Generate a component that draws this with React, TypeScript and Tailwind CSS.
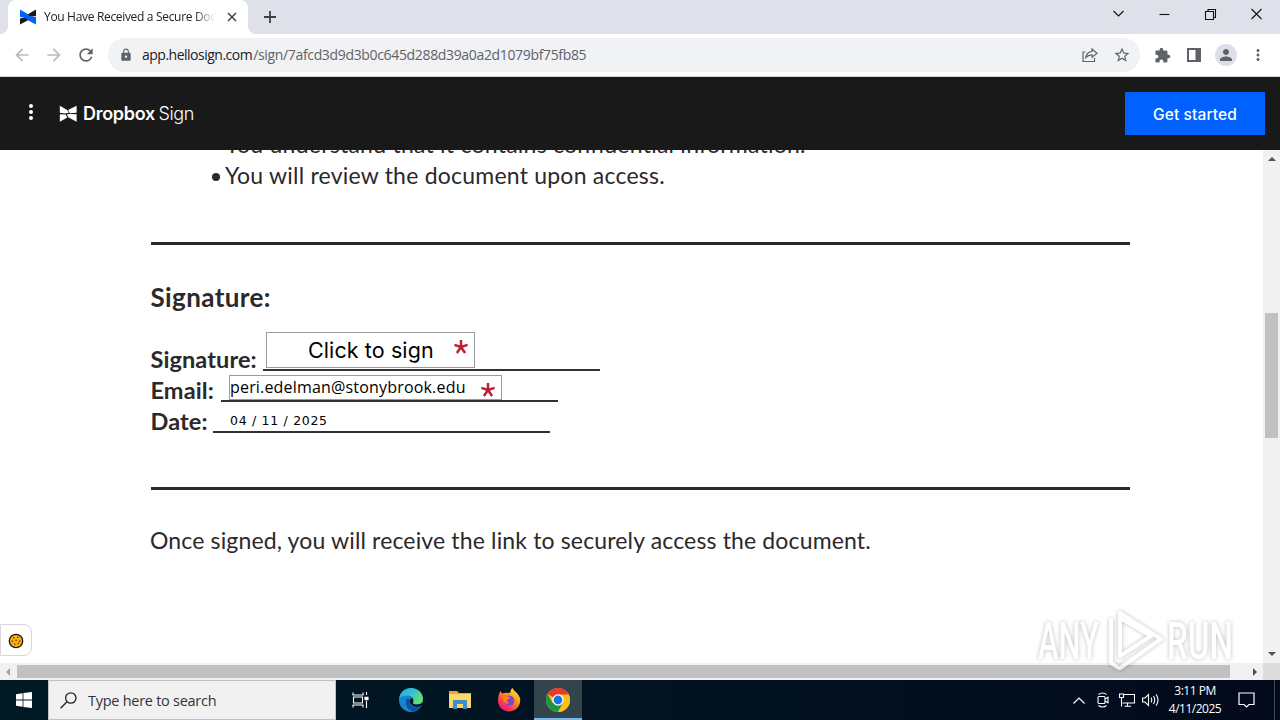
import React from 'react';
import {
    MdArrowBack,
    MdArrowForward,
    MdExtension,
    MdLock,
    MdMoreVert,
    MdPerson,
    MdRefresh,
    MdStarBorder,
} from 'react-icons/md';

const DOC_FONT = "font-['Lato','Liberation_Sans',sans-serif]";
const UI_FONT = "font-['Open_Sans','Noto_Sans',sans-serif]";

function TabStrip() {
    return (
        <div className="flex h-[34px] bg-[#dee1e9] text-[#202124]">
            <div className="w-2 bg-white">
                <div className="h-full rounded-br-lg bg-[#dee1e9]" />
            </div>
            <div className="flex w-[240px] items-center rounded-t-lg bg-white pl-3">
                <svg viewBox="0 0 16 16" className="h-4 w-4 shrink-0">
                    <path d="M16 0.5 V7 L9 8 L7.5 5.5 Z" fill="#1a1919" />
                    <path d="M0 15.5 V9.5 L6.5 8 L8.5 11 Z" fill="#1a1919" />
                    <path d="M0 0.5 L7.6 5 L10.6 7.4 L16 8 V15.5 L8.4 11.4 L5.4 8.8 L0 8 Z" fill="#0061fe" />
                </svg>
                <span className="ml-2 w-[171px] overflow-hidden whitespace-nowrap text-[12px] tracking-[-0.32px] [mask-image:linear-gradient(to_right,black_88%,transparent)]">
                    You Have Received a Secure Doc
                </span>
                <svg viewBox="0 0 10 10" className="ml-[12px] h-[10px] w-[10px] shrink-0" stroke="#45484c" strokeWidth="1.6">
                    <path d="M1 1 L9 9 M9 1 L1 9" />
                </svg>
            </div>
            <div className="w-2 bg-white">
                <div className="h-full rounded-bl-lg bg-[#dee1e9]" />
            </div>
            <svg viewBox="0 0 12 12" className="ml-2 mt-[11px] h-3 w-3" stroke="#3c4043" strokeWidth="1.8">
                <path d="M6 0 V12 M0 6 H12" />
            </svg>
            <div className="ml-auto flex">
                <WindowIcon d="M1.5 4 L6.5 9 L11.5 4" />
                <WindowIcon d="M1.5 7.5 H11.5" />
                <WindowIcon d="M1.5 4.5 H9.5 V12.5 H1.5 Z M4 4 V2.5 H11.5 V10.5 H10" />
                <WindowIcon d="M1.5 2 L11.5 12 M11.5 2 L1.5 12" />
            </div>
        </div>
    );
}

function WindowIcon({ d }: { d: string }) {
    return (
        <div className="flex h-[28px] w-[46px] items-center justify-center pr-px">
            <svg viewBox="0 0 13 14" className="h-[14px] w-[13px]" fill="none" stroke="#111" strokeWidth="1.1">
                <path d={d} />
            </svg>
        </div>
    );
}

function Toolbar() {
    return (
        <div className="flex h-[43px] items-center border-b border-[#d8dadd] bg-white pl-3 text-[#5f6368]">
            <MdArrowBack className="h-5 w-5 text-[#b9bbbe]" />
            <MdArrowForward className="ml-3 h-5 w-5 text-[#b9bbbe]" />
            <MdRefresh className="ml-3 h-5 w-5" />
            <div className="ml-[12px] flex h-[34px] w-[1032px] items-center rounded-full bg-[#f0f2f4] pl-[11px] pr-[9px]">
                <MdLock className="h-[14px] w-[14px]" />
                <span className="mb-px ml-[9px] text-[14px] tracking-[-0.5px] text-[#202124]">app.hellosign.com</span>
                <span className="mb-px ml-px text-[14px] tracking-[-0.34px]">/sign/7afcd3d9d3b0c645d288d39a0a2d1079bf75fb85</span>
                <svg viewBox="0 0 16 16" className="ml-auto h-4 w-4" fill="none" stroke="#5f6368" strokeWidth="1.2">
                    <path d="M3.5 5 H1 V14.5 H12.5 V11" />
                    <path d="M10 2 L15 6.3 L10 10.2 V7.9 C7.5 7.8 5.6 8.6 3.8 10.6 C4.4 7 6.5 4.8 10 4.4 Z" />
                </svg>
                <MdStarBorder className="ml-[15px] h-[18px] w-[18px]" />
            </div>
            <MdExtension className="ml-[14px] h-[17px] w-[17px]" />
            <svg viewBox="0 0 14 14" className="ml-4 h-[14px] w-[14px]" fill="#5f6368">
                <path d="M0 0 H14 V14 H0 Z M2 2 V12 H8.5 V2 Z" fillRule="evenodd" />
            </svg>
            <div className="ml-[14px] flex h-[22px] w-[22px] items-center justify-center rounded-full bg-[#dcdfe8]">
                <MdPerson className="h-[18px] w-[18px]" />
            </div>
            <MdMoreVert className="ml-[12px] h-[18px] w-[18px]" />
        </div>
    );
}

function AppHeader() {
    return (
        <header className="flex h-[73px] items-center bg-[#1a1919] pl-[29px] pr-[15px] text-white">
            <svg viewBox="0 0 4 18" className="-mt-1 h-[18px] w-1" fill="white">
                <circle cx="2" cy="3" r="2" />
                <circle cx="2" cy="9" r="2" />
                <circle cx="2" cy="15" r="2" />
            </svg>
            <svg viewBox="0 0 18 18" className="ml-[26px] h-[18px] w-[18px]" fill="white">
                <path d="M0.8 0.8 L8.2 5 L9.9 7.8 L6 8.6 L0.8 7.8 Z" />
                <path d="M17.6 0.8 V7.8 L10.8 8.2 L9 5 Z" />
                <path d="M0.8 16.8 V9.2 L6.4 9.6 L8.4 12.5 Z" />
                <path d="M17.6 16.8 L9.6 12.4 L7.6 9.5 L11 9 L17.6 9.2 Z" />
            </svg>
            <div className="ml-[6px] whitespace-nowrap font-['Inter',sans-serif] text-[18px] leading-6 tracking-[-0.4px]">
                <span className="font-semibold tracking-[-0.3px]">Dropbox</span> <span className="-ml-px font-light">Sign</span>
            </div>
            <button type="button" className="ml-auto h-[43px] w-[140px] bg-[#0061fe] pt-0.5 font-['Inter',sans-serif] text-[15.5px] font-medium tracking-[0.1px]">
                Get started
            </button>
        </header>
    );
}

function RequiredStar({ className }: { className: string }) {
    return (
        <svg viewBox="0 0 14 14" className={className} stroke="#bd1f36" strokeWidth="2.5">
            <path d="M7 7 V0 M7 7 L0.4 4.9 M7 7 L13.6 4.9 M7 7 L2.9 13 M7 7 L11.1 13" />
        </svg>
    );
}

function FormRow({ label, labelClass, children }: { label: string; labelClass: string; children: React.ReactNode }) {
    return (
        <div className="relative flex h-[31px]">
            <span className={`${labelClass} shrink-0 whitespace-nowrap pl-[0.5px] text-[23.5px] font-bold leading-[30px] tracking-[0.1px]`}>{label}</span>
            <div className="mt-[25px] h-[2px] w-[337px] bg-[#333132]" />
            {children}
        </div>
    );
}

function DocumentPage() {
    return (
        <main className={`relative flex-1 overflow-hidden bg-white pl-[150px] text-[#2b292a] ${DOC_FONT}`}>
            <ul className="-mt-[21px] whitespace-nowrap pl-[62px] text-[23px] leading-[31px]">
                <li className="flex items-center">
                    <span className="mr-[5px] mt-0.5 h-[8px] w-[8px] rounded-full bg-[#2b292a]" />
                    <span className="tracking-[0.24px]">You understand that it contains confidential information.</span>
                </li>
                <li className="flex items-center">
                    <span className="mr-[5px] mt-[3px] h-[8px] w-[8px] rounded-full bg-[#2b292a]" />
                    <span className="tracking-[0.22px]">You will review the document upon access.</span>
                </li>
            </ul>
            <hr className="ml-[0.5px] mt-[51px] h-[3px] w-[979px] border-0 bg-[#2b292a]" />
            <h2 className="mt-[36px] pl-[0.5px] text-[26px] font-bold leading-[32px] tracking-[0.4px]">Signature:</h2>
            <section className="mt-[31px]">
                <FormRow label="Signature:" labelClass="w-[113px]">
                    <button type="button" className="absolute left-[116px] top-[-12px] flex h-[36px] w-[209px] items-center border border-[#9a9a9a] bg-white pl-[41px] font-['Inter',sans-serif] text-[21.5px] tracking-[0.1px] text-black">
                        <span className="whitespace-nowrap">Click to sign</span>
                        <RequiredStar className="mb-[6px] ml-[20px] h-[14px] w-[14px]" />
                    </button>
                </FormRow>
                <FormRow label="Email:" labelClass="w-[71px]">
                    <div className={`absolute left-[79px] top-0 flex h-[25px] w-[273px] items-center border border-[#9a9a9a] bg-white text-[16px] tracking-[0.18px] text-black ${UI_FONT}`}>
                        <span className="mb-[1px] w-[251px] whitespace-nowrap">peri.edelman@stonybrook.edu</span>
                        <RequiredStar className="mt-[5px] h-[14px] w-[14px]" />
                    </div>
                </FormRow>
                <FormRow label="Date:" labelClass="w-[63px]">
                    <span className="absolute left-[80px] top-[7px] whitespace-nowrap font-['DejaVu_Sans',sans-serif] text-[12.5px] leading-4 tracking-[0.7px] text-black">
                        04 / 11 / 2025
                    </span>
                </FormRow>
            </section>
            <hr className="ml-[0.5px] mt-[50px] h-[3px] w-[979px] border-0 bg-[#2b292a]" />
            <p className="mt-[35px] whitespace-nowrap text-[23px] leading-[31px] tracking-[0.15px]">
                Once signed, you will receive the link to securely access the document.
            </p>
            <div className="absolute bottom-[7px] left-0 flex h-[32px] w-[32px] items-center justify-center rounded-r-lg border border-[#dcd6dc] bg-white">
                <svg viewBox="0 0 16 16" className="mt-px h-4 w-4">
                    <circle cx="8" cy="8" r="6.7" fill="#fbb116" stroke="#221a10" strokeWidth="1.3" />
                    <path d="M5 4h1.5v1.5H5z M9 3.5h1.5V5H9z M3.6 7.5h1.5V9H3.6z M7.4 6.5h1.5V8H7.4z M11 7.5h1.5V9H11z M6 10.5h1.5V12H6z M9.4 9.8h1.5v1.5H9.4z" fill="#8c3c14" />
                </svg>
            </div>
        </main>
    );
}

function VerticalScrollbar() {
    return (
        <div className="flex w-[17px] flex-col items-center bg-[#f1f1f1]">
            <svg viewBox="0 0 8 4" className="mt-[7px] h-1 w-2" fill="#505050">
                <path d="M0 4 L4 0 L8 4 Z" />
            </svg>
            <div className="mt-[152px] h-[125px] w-[13px] bg-[#c1c1c1]" />
            <svg viewBox="0 0 8 4" className="mb-[7px] mt-auto h-1 w-2" fill="#505050">
                <path d="M0 0 L4 4 L8 0 Z" />
            </svg>
        </div>
    );
}

function HorizontalScrollbar() {
    return (
        <div className="flex h-[17px] items-center bg-[#f1f1f1]">
            <svg viewBox="0 0 4 8" className="ml-[6px] h-2 w-1" fill="#a3a3a3">
                <path d="M4 0 L0 4 L4 8 Z" />
            </svg>
            <div className="ml-[7px] h-[13px] w-[1213px] bg-[#c1c1c1]" />
            <svg viewBox="0 0 4 8" className="ml-[23px] h-2 w-1" fill="#505050">
                <path d="M0 0 L4 4 L0 8 Z" />
            </svg>
            <div className="ml-auto h-full w-[17px] bg-[#dcdcdc]" />
        </div>
    );
}

function Watermark() {
    return (
        <svg
            viewBox="0 0 200 66"
            className="absolute left-[1036px] top-[608px] h-[66px] w-[200px] drop-shadow-[0_0_2px_rgba(0,0,0,0.35)]"
            opacity="0.75"
        >
            <g fill="#fff" fontFamily="Roboto, sans-serif" fontWeight="500" fontSize="51">
                <text x="2" y="51" textLength="61" lengthAdjust="spacingAndGlyphs">ANY</text>
                <text x="131" y="51" textLength="66" lengthAdjust="spacingAndGlyphs">RUN</text>
            </g>
            <g fill="none" stroke="#fff" strokeWidth="4" strokeLinejoin="round" strokeLinecap="round">
                <path d="M84 5 L125 31 L84 60" />
                <path d="M84 5 V48 L115 28 L86 11" />
                <path d="M75 12 V55 L83 60" />
            </g>
        </svg>
    );
}

function EdgeIcon() {
    return (
        <svg viewBox="0 0 24 24" className="h-6 w-6">
            <defs>
                <linearGradient id="edge-top" x1="0" y1="0" x2="1" y2="0.6">
                    <stop offset="0" stopColor="#2aa6df" />
                    <stop offset="0.5" stopColor="#35c1cf" />
                    <stop offset="1" stopColor="#66e06a" />
                </linearGradient>
            </defs>
            <circle cx="12" cy="12" r="12" fill="#1683d3" />
            <path d="M0.2 10 C1.5 3.6 6.5 0 12 0 C19 0 24 5.2 24 10.8 C24 14.5 21 16.5 18 16.5 C15 16.5 13.5 15.4 14 14.4 C16 11.5 13.5 7.4 9 7.4 C5 7.4 1.8 8.5 0.2 10 Z" fill="url(#edge-top)" />
            <path d="M8.2 10 C4.5 16 9 23 15 23.6 C18.5 22.6 21 20.6 22.3 18 C15 21 9.5 16.5 11.2 12 Z" fill="#12529c" />
            <path d="M12 10 C14 10.4 14.8 12.4 14 14.4 C13.5 15.4 15 16.5 18 16.5 C21 16.5 23 15.4 23.6 14 L23.8 16.8 L20 18.7 C15 19.4 10.5 16 10.8 12.5 Z" fill="#02151f" />
        </svg>
    );
}

function ExplorerIcon() {
    return (
        <svg viewBox="0 0 22 18" className="h-[18px] w-[22px]">
            <path d="M0 0 H8 L10 2 H22 V17 H0 Z" fill="#e9a73b" />
            <path d="M0 3 H22 V17 H0 Z" fill="#fbd66d" />
            <path d="M4 10 Q4 9 5 9 H17 Q18 9 18 10 V18 H14 V13 H8 V18 H4 Z" fill="#3c8fc9" />
        </svg>
    );
}

function FirefoxIcon() {
    return (
        <svg viewBox="0 0 24 24" className="h-6 w-6">
            <defs>
                <linearGradient id="fox" x1="0.9" y1="0" x2="0.2" y2="1">
                    <stop offset="0" stopColor="#fff44f" />
                    <stop offset="0.4" stopColor="#ff980e" />
                    <stop offset="0.75" stopColor="#ff3750" />
                    <stop offset="1" stopColor="#e31587" />
                </linearGradient>
            </defs>
            <path d="M3.5 3 C4 4.4 4.6 5 5.5 5.5 C7 4.8 8.5 4.6 10 5 L13.5 4.6 C13.4 2.8 14 1 15.6 0 C16.2 2.4 19.4 4 20.6 6 C22.4 8 23.4 10.4 23.2 13 C22.8 19 18 23.4 12 23.4 C5.8 23.4 1 18.6 1 12.5 C1 9 1.8 5.6 3.5 3 Z" fill="url(#fox)" />
            <circle cx="12.2" cy="12.6" r="5.2" fill="#7b45d9" />
            <path d="M6 8 C8 7 10 7.3 11.5 8.8 L13.5 9.3 C13.5 10.6 11.5 10.8 10.5 11.7 C9.5 13 10.5 14.8 12.4 14.6 C10.8 16.6 7.5 15.5 6.4 12.8 Z" fill="#ff7a1c" />
        </svg>
    );
}

function ChromeIcon() {
    return (
        <svg viewBox="0 0 24 24" className="mt-0.5 h-6 w-6">
            <circle cx="12" cy="12" r="12" fill="#fbc116" />
            <path d="M12 12 L1.6 6 A12 12 0 0 1 22.4 6 Z" fill="#e33b2e" />
            <path d="M1.6 6 A12 12 0 0 0 12 24 L17.2 15 L6.8 15 Z" fill="#229342" />
            <path d="M12 6.5 H22.7 A12 12 0 0 1 12 24 L16.8 15 Z" fill="#fbc116" />
            <circle cx="12" cy="12" r="5.7" fill="#fff" />
            <circle cx="12" cy="12" r="4.4" fill="#1a73e8" />
        </svg>
    );
}

function Taskbar() {
    return (
        <footer className={`flex h-[40px] bg-linear-to-r from-[#001a24] to-[#020a1c] text-white ${UI_FONT}`}>
            <div className="flex w-12 items-center justify-center">
                <svg viewBox="0 0 16 16" className="h-4 w-4" fill="white">
                    <path d="M0 2.2 L6.6 1.2 V7.6 H0 Z M7.4 1.1 L16 0 V7.6 H7.4 Z M0 8.4 H6.6 V14.8 L0 13.8 Z M7.4 8.4 H16 V16 L7.4 14.9 Z" />
                </svg>
            </div>
            <div className="flex w-[288px] items-center border border-[#bfc1c2] bg-[#f1f1f1] pl-[11px] text-[#333]">
                <svg viewBox="0 0 17 17" className="h-[17px] w-[17px]" fill="none" stroke="#222" strokeWidth="1.3">
                    <circle cx="10.8" cy="6" r="5.2" />
                    <path d="M7 9.8 L0.6 16.2" />
                </svg>
                <span className="ml-[11px] mt-0.5 text-[14.5px] tracking-[-0.27px]">Type here to search</span>
            </div>
            <div className="flex w-12 items-center justify-center">
                <svg viewBox="0 0 17 16" className="h-4 w-[17px]" fill="none" stroke="white" strokeWidth="1.1">
                    <path d="M1 0.5 V3 H11 V0.5 M1.5 5 H10.5 V11 H1.5 Z M1 15.5 V13 H11 V15.5 M14.5 0 V3 M14.5 9 V16" />
                    <path d="M13 5.2 H16 V7.6 H13 Z" fill="white" />
                </svg>
            </div>
            <div className="ml-[3px] flex w-12 items-center justify-center"><EdgeIcon /></div>
            <div className="ml-[1px] flex w-12 items-center justify-center"><ExplorerIcon /></div>
            <div className="ml-[1px] flex w-12 items-center justify-center"><FirefoxIcon /></div>
            <div className="ml-[1px] flex w-12 items-center justify-center border-b-2 border-[#76b9ed] bg-[#33444c]"><ChromeIcon /></div>
            <div className="ml-auto flex items-center">
                <svg viewBox="0 0 12 7" className="h-[7px] w-3" fill="none" stroke="white" strokeWidth="1.2">
                    <path d="M0.5 6.5 L6 1 L11.5 6.5" />
                </svg>
                <svg viewBox="0 0 12 16" className="ml-3 h-4 w-3" fill="none" stroke="white" strokeWidth="1.1">
                    <path d="M1.5 2.5 Q5.5 -0.6 9.5 2.5 M1.5 13.5 Q5.5 16.6 9.5 13.5" />
                    <rect x="1" y="4.5" width="7" height="7" rx="1" />
                    <path d="M8 7 L11 5.2 V10.8 L8 9" />
                </svg>
                <svg viewBox="0 0 16 14" className="ml-[10px] h-[14px] w-4" fill="none" stroke="white" strokeWidth="1.1">
                    <path d="M5 1.5 H15.5 V10 H3.5 M8.5 10 V13 M5.5 13.2 H12 M0.5 1 H4.5 V4.5 H0.5 Z M2.5 4.5 V13.5" />
                </svg>
                <svg viewBox="0 0 17 14" className="ml-[7px] h-[14px] w-[17px]" fill="none" stroke="white" strokeWidth="1.1">
                    <path d="M0.6 5 H3 L6.5 1.5 V12.5 L3 9 H0.6 Z M9 4.6 Q10.5 7 9 9.4 M11.5 3 Q14 7 11.5 11 M14 1.2 Q18 7 14 12.8" />
                </svg>
                <div className="ml-2 w-[56px] whitespace-nowrap text-center text-[12px] leading-[18px] tracking-[-0.5px]">
                    <div>3:11 PM</div>
                    <div>4/11/2025</div>
                </div>
                <svg viewBox="0 0 17 16" className="ml-[15px] h-4 w-[17px]" fill="none" stroke="white" strokeWidth="1.2">
                    <path d="M1 1 H16 V12.5 H11 L8.5 15 L6 12.5 H1 Z" />
                </svg>
                <div className="ml-[19px] mr-[5px] h-[40px] w-px bg-[#3f4752]" />
            </div>
        </footer>
    );
}

export default function App() {
    return (
        <div className={`relative flex h-[720px] w-[1280px] flex-col overflow-hidden bg-white ${UI_FONT}`}>
            <TabStrip />
            <Toolbar />
            <AppHeader />
            <div className="flex min-h-0 flex-1">
                <DocumentPage />
                <VerticalScrollbar />
            </div>
            <HorizontalScrollbar />
            <Taskbar />
            <Watermark />
        </div>
    );
}
